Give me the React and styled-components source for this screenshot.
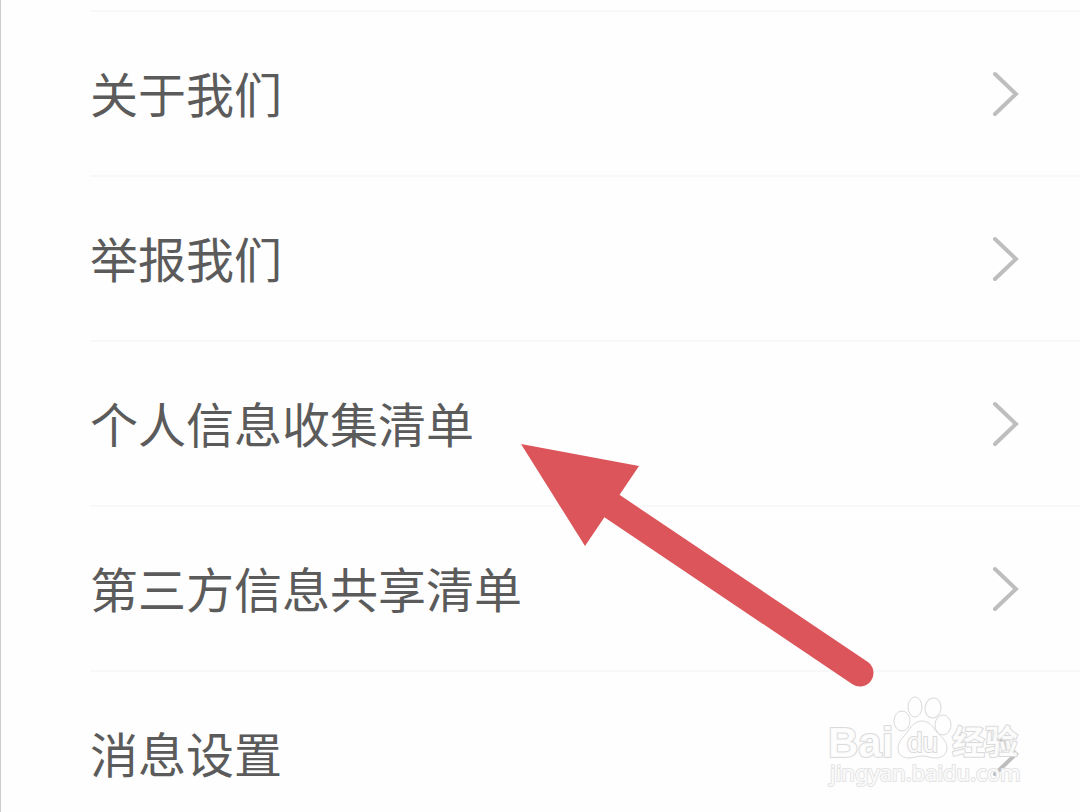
import React from "react";
import styled, { createGlobalStyle } from "styled-components";

const GlobalStyle = createGlobalStyle`
  * { box-sizing: border-box; }
  body { margin: 0; background: #fefefe; }
`;

const Page = styled.main`
  position: relative;
  height: 100vh;
  overflow: hidden;
  padding-left: 89px;
  border-left: 1px solid #cccccc;
  background: #fefefe;
  font-family: "Noto Sans CJK SC", sans-serif;
`;

const Menu = styled.ul`
  list-style: none;
  margin: 0;
  padding: 10px 0 0;
`;

const MenuItem = styled.li`
  border-top: 2px solid #f8f8f8;
`;

const MenuLink = styled.a`
  display: flex;
  align-items: center;
  justify-content: space-between;
  height: 163px;
  padding-right: 59px;
  color: #5b5b5b;
  font-size: 48px;
  line-height: 72px;
  text-decoration: none;
`;

const Label = styled.span`
  padding-bottom: 4px;
`;

const ChevronIcon = styled.svg`
  flex: none;
  width: 30px;
  height: 48px;
  fill: none;
  stroke: #bebebe;
  stroke-width: 4;
  stroke-linecap: round;
  stroke-linejoin: miter;
`;

const Arrow = styled.svg`
  position: absolute;
  left: 519px;
  top: 443px;
  width: 356px;
  height: 246px;
  pointer-events: none;
`;

const Watermark = styled.svg`
  position: absolute;
  right: 50px;
  bottom: 20px;
  width: 210px;
  height: 100px;
  pointer-events: none;
  fill: rgba(254, 254, 254, 0.9);
  stroke: #dadada;
  stroke-width: 1;

  text {
    paint-order: stroke;
    stroke-width: 2;
    stroke-linejoin: round;
  }
`;

const Brand = styled.text`
  font: bold 42px "Liberation Sans", sans-serif;
`;

const BrandSmall = styled.text`
  font: 28px "Liberation Sans", sans-serif;
`;

const BrandHan = styled.text`
  font: bold 33px "Noto Sans CJK SC", sans-serif;
`;

const SiteUrl = styled.text`
  font: 22px "Noto Sans", sans-serif;
  stroke: #e4e4e4;
`;

const items = ["关于我们", "举报我们", "个人信息收集清单", "第三方信息共享清单", "消息设置"];

function Chevron() {
  return (
    <ChevronIcon viewBox="0 0 30 48" aria-hidden="true">
      <path d="M4 4 L25 24 L4 44" />
    </ChevronIcon>
  );
}

export default function App() {
  return (
    <>
      <GlobalStyle />
      <Page>
        <Menu>
          {items.map((label) => (
            <MenuItem key={label}>
              <MenuLink href="#">
                <Label>{label}</Label>
                <Chevron />
              </MenuLink>
            </MenuItem>
          ))}
        </Menu>
        <Arrow viewBox="0 0 356 246" aria-hidden="true">
          <path d="M1 1 L119 23 L65 103 Z" fill="#dc555b" />
          <path d="M86 59 L340 230" stroke="#dc555b" strokeWidth="27" strokeLinecap="round" fill="none" />
        </Arrow>
        <Watermark viewBox="0 0 210 100" aria-label="Baidu 经验">
          <ellipse cx="82" cy="29" rx="8" ry="10" />
          <ellipse cx="95" cy="15" rx="7" ry="10" />
          <ellipse cx="113" cy="16" rx="8" ry="10" transform="rotate(8 113 16)" />
          <ellipse cx="123" cy="33" rx="8" ry="10" />
          <path d="M102 29 C108 29 112 33 116 39 C120 44 127 48 127 56 C127 62 122 66 116 66 C110 66 108 64 102 64 C96 64 95 66 89 66 C82 66 78 62 78 56 C78 49 84 45 88 39 C92 33 96 29 102 29 Z" />
          <Brand x="8" y="65">Bai</Brand>
          <BrandSmall x="87" y="60">du</BrandSmall>
          <BrandHan x="132" y="62">经验</BrandHan>
          <SiteUrl x="10" y="89">jingyan.baidu.com</SiteUrl>
        </Watermark>
      </Page>
    </>
  );
}
